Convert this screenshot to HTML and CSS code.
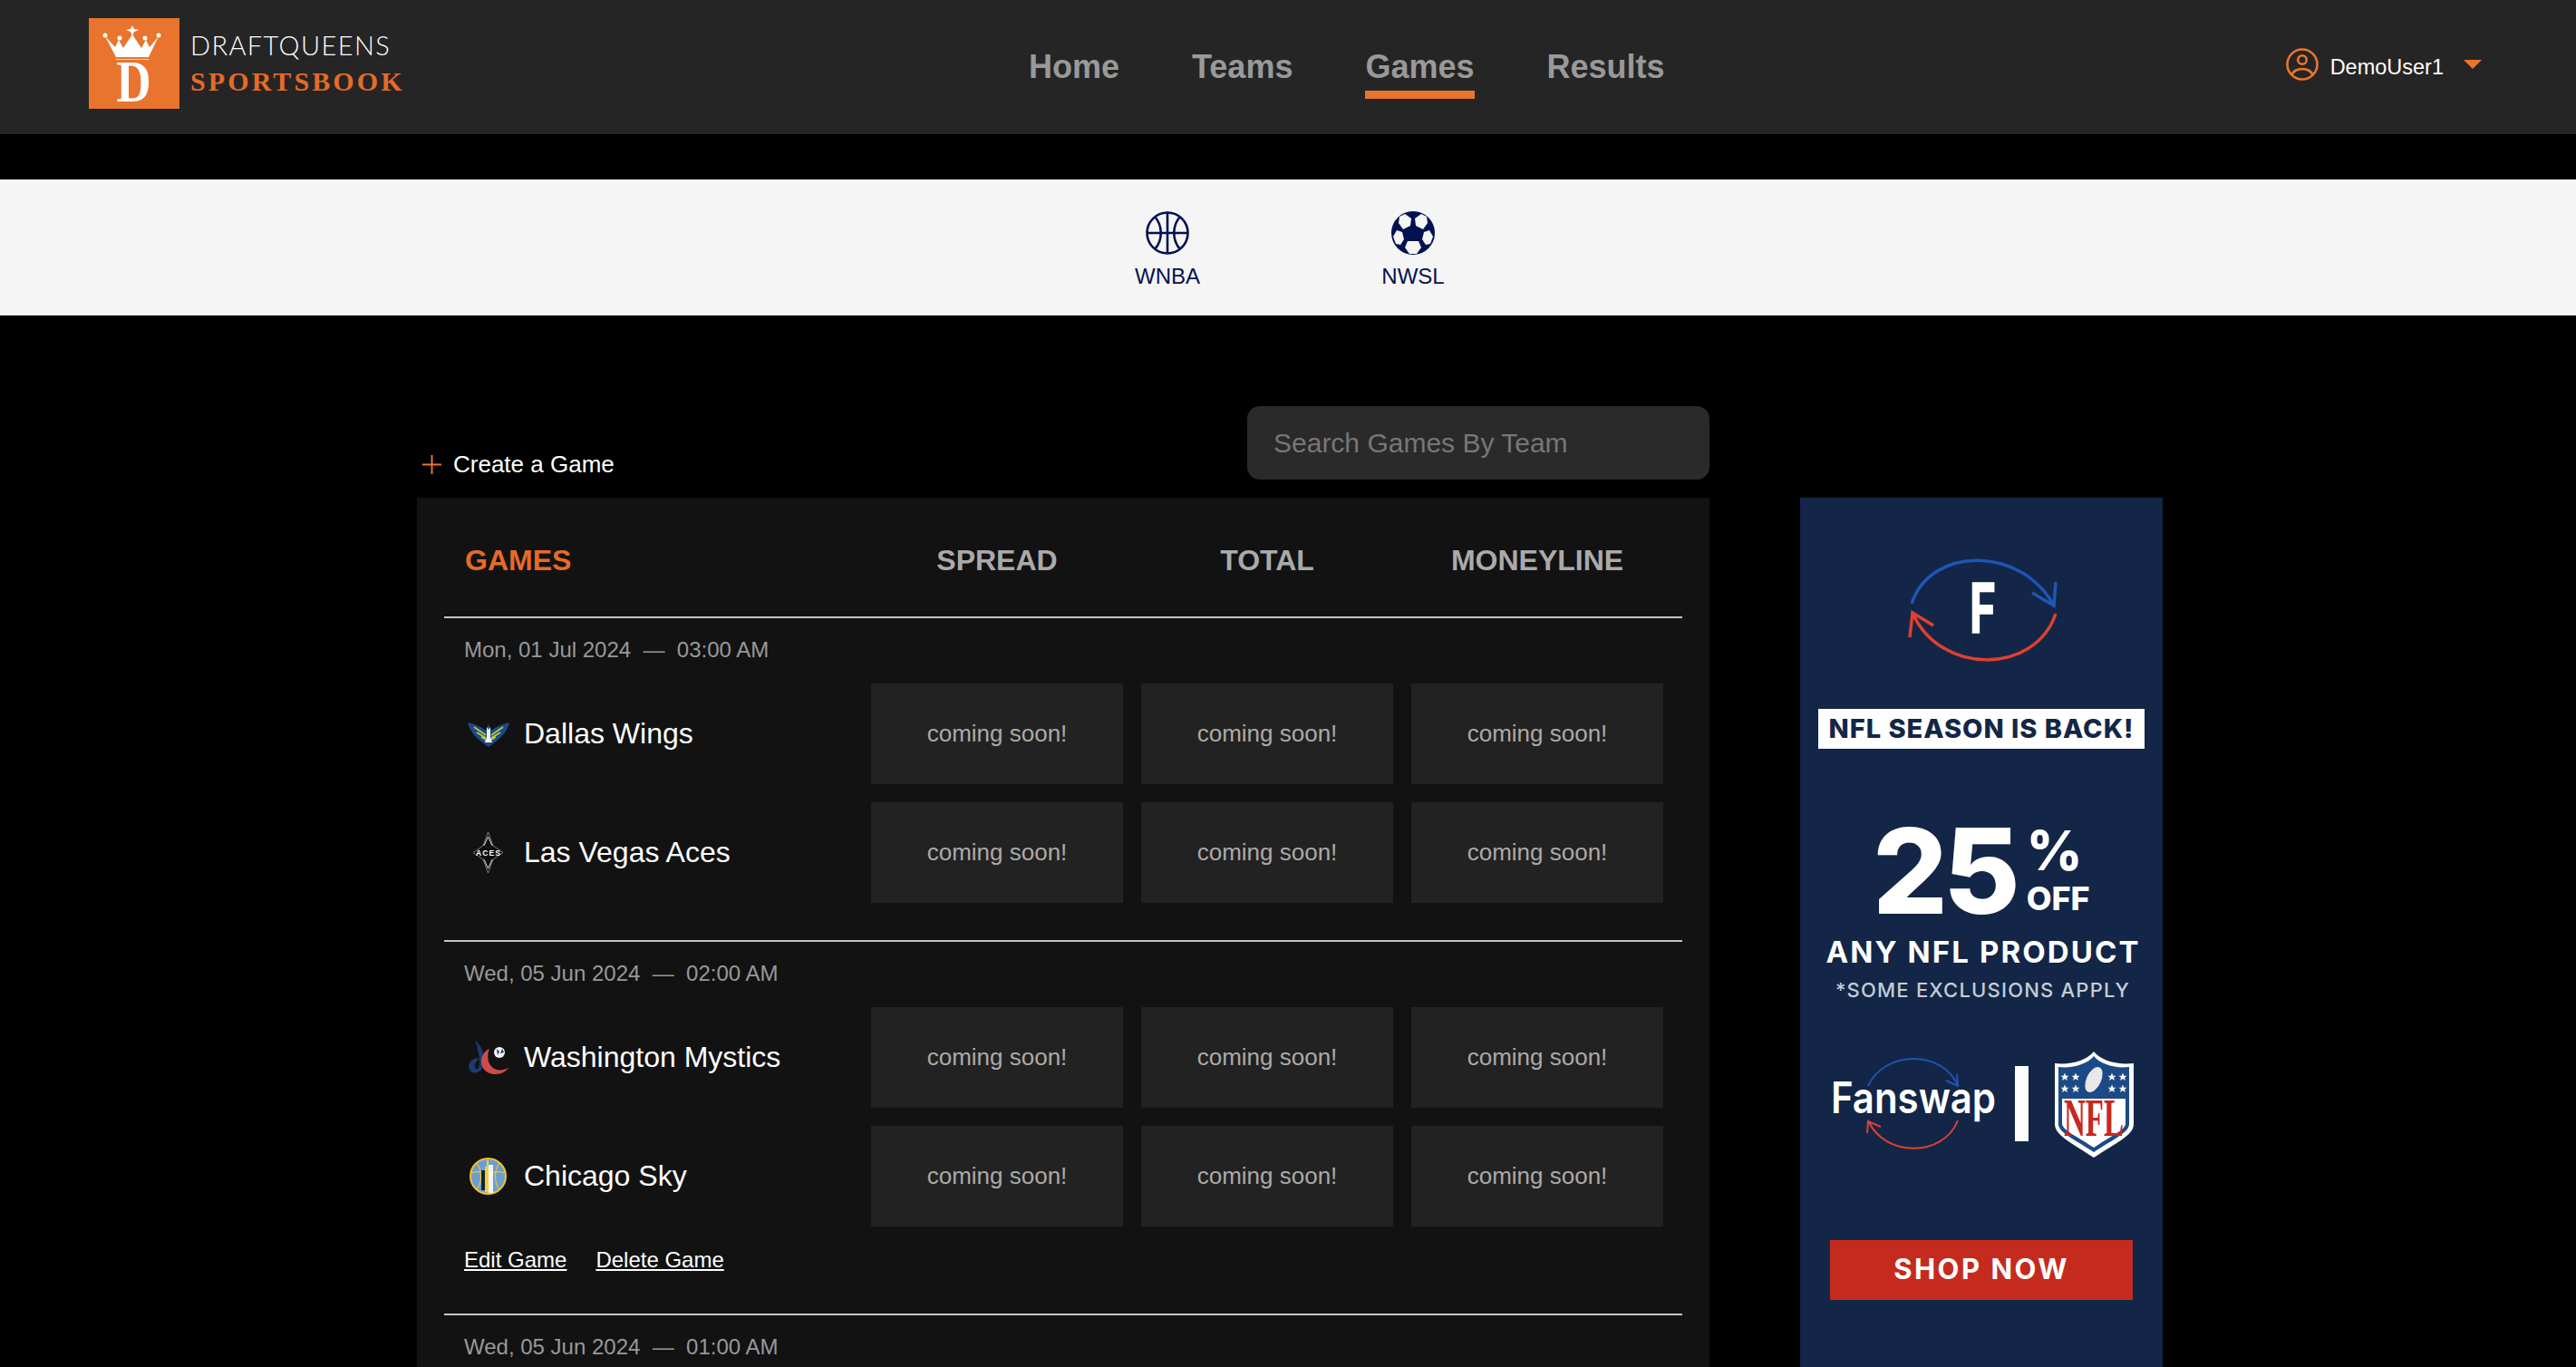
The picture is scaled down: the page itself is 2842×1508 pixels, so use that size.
FILE: index.html
```html
<!DOCTYPE html>
<html lang="en">

<head>
    <meta charset="UTF-8">
    <title>DraftQueens Sportsbook</title>
    <link rel="stylesheet" href="styles.css">
</head>

<body>
    <header class="topbar">
        <a class="brand" href="#">
            <svg class="brand-mark" viewBox="0 0 100 100">
                <rect width="100" height="100" fill="#e9742d" />
                <g fill="#fff">
                    <path d="M18 20 L29 32 L33 24 L38 33 L48 18 L58 33 L63 24 L67 32 L77 20 L66 43 L30 43 Z" />
                    <circle cx="18" cy="19" r="2.5" />
                    <circle cx="77" cy="19" r="2.5" />
                    <circle cx="34" cy="22" r="2.5" />
                    <circle cx="62" cy="22" r="2.5" />
                    <path d="M48 8 L50 12 L55 13 L50 15 L48 20 L46 15 L41 13 L46 12 Z" />
                    <rect x="30" y="45" width="36" height="1" opacity="0.7" />
                    <text class="brand-d" x="62" y="92" text-anchor="middle" transform="scale(.8 1)">D</text>
                </g>
            </svg>
            <span class="brand-text">
                <span class="brand-top">DRAFTQUEENS</span>
                <span class="brand-bottom">SPORTSBOOK</span>
            </span>
        </a>

        <nav class="main-nav">
            <a href="#">Home</a>
            <a href="#">Teams</a>
            <a class="active" href="#">Games</a>
            <a href="#">Results</a>
        </nav>

        <div class="user-menu">
            <svg class="user-icon" viewBox="0 0 36 36" fill="none" stroke="#e9742d" stroke-width="2.6">
                <circle cx="18" cy="18" r="16.5" />
                <circle cx="18" cy="13" r="4.8" />
                <path d="M6.5 29.5 C10 21 26 21 29.5 29.5" />
            </svg>
            <span>DemoUser1</span>
            <span class="caret"></span>
        </div>
    </header>

    <div class="league-bar">
        <a class="league" href="#">
            <svg viewBox="0 0 48 48" fill="none" stroke="#02124f" stroke-width="2.6">
                <circle cx="24" cy="24" r="22.5" />
                <path d="M24 2 V46 M2 24 H46" />
                <path d="M10 6 C19 16 19 32 10 42 M38 6 C29 16 29 32 38 42" />
            </svg>
            <span>WNBA</span>
        </a>
        <a class="league" href="#">
            <svg viewBox="0 0 48 48">
                <circle cx="24" cy="24" r="24" fill="#02124f" />
                <g fill="#f5f5f5">
                    <polygon points="15,3 22,8 21,16 13,20 8,13 9,6" />
                    <polygon points="33,3 39,6 40,13 35,20 27,16 26,8" />
                    <polygon points="6,21 12,23 14,31 10,37 5,36 2,28" />
                    <polygon points="42,21 36,23 34,31 38,37 43,36 46,28" />
                    <polygon points="18,33 30,33 33,40 28,47 20,47 15,40" />
                </g>
            </svg>
            <span>NWSL</span>
        </a>
    </div>

    <main class="content">
        <div class="toolbar">
            <a class="create-game" href="#">
                <svg viewBox="0 0 21 21" stroke="#e9742d" stroke-width="2">
                    <path d="M10.5 0 V21 M0 10.5 H21" />
                </svg>
                <span>Create a Game</span>
            </a>
            <input class="search" type="text" placeholder="Search Games By Team">
        </div>

        <section class="games-card">
            <div class="games-head">
                <div class="title">GAMES</div>
                <div>SPREAD</div>
                <div>TOTAL</div>
                <div>MONEYLINE</div>
            </div>

            <div class="game">
                <div class="game-date">Mon, 01 Jul 2024 &nbsp;—&nbsp; 03:00 AM</div>
                <div class="team-row">
                    <div class="team">
                        <span class="team-logo">
                            <svg width="46" height="28" viewBox="0 0 46 28">
                                <path d="M0 1 C8 3 14 5 20 10 L23 3 L26 10 C32 5 38 3 46 1 C44 10 38 18 23 28 C8 18 2 10 0 1 Z" fill="#1d4a85" />
                                <path d="M7 6 L20 15 M10 12 L20 18 M15 17 L20 20 M39 6 L26 15 M36 12 L26 18 M31 17 L26 20" stroke="#bccb3a" stroke-width="1.6" />
                                <path d="M21 6 L23 9 L25 6 L25 17 L27 23 L19 23 L21 17 Z" fill="#f4f4f4" />
                            </svg>
                        </span>
                        <span>Dallas Wings</span>
                    </div>
                    <div class="odds">coming soon!</div>
                    <div class="odds">coming soon!</div>
                    <div class="odds">coming soon!</div>
                </div>
                <div class="team-row">
                    <div class="team">
                        <span class="team-logo">
                            <svg width="33" height="45" viewBox="0 0 33 45">
                                <path d="M16.5 0 L22 15 L33 22.5 L22 30 L16.5 45 L11 30 L0 22.5 L11 15 Z" fill="#0c0c0c" stroke="#999" stroke-width="0.8" />
                                <path d="M12 15 L16.5 5 L21 15 M12 30 L16.5 40 L21 30" fill="none" stroke="#ddd" stroke-width="1" />
                                <text class="aces-text" x="3" y="25.6" textLength="27">ACES</text>
                            </svg>
                        </span>
                        <span>Las Vegas Aces</span>
                    </div>
                    <div class="odds">coming soon!</div>
                    <div class="odds">coming soon!</div>
                    <div class="odds">coming soon!</div>
                </div>
            </div>

            <div class="game">
                <div class="game-date">Wed, 05 Jun 2024 &nbsp;—&nbsp; 02:00 AM</div>
                <div class="team-row">
                    <div class="team">
                        <span class="team-logo">
                            <svg width="46" height="40" viewBox="0 0 46 40">
                                <path d="M8 0 C18 10 21 22 17 30 C14 37 5 39 2 33 C-1 27 4 20 13 20 C9 24 6 29 9 32 C13 34 16 24 8 0 Z" fill="#1c3a70" />
                                <path d="M24 10 C14 14 11 30 22 36 C32 41 42 36 46 30 C40 35 30 35 25 28 C21 22 22 15 24 10 Z" fill="#cf4b4b" />
                                <circle cx="35" cy="14" r="6" fill="#f4f4f4" />
                                <path d="M32 10 L35 13 L33 17 Z M38 10 L40 14 L36 15 Z" fill="#1c3a70" />
                            </svg>
                        </span>
                        <span>Washington Mystics</span>
                    </div>
                    <div class="odds">coming soon!</div>
                    <div class="odds">coming soon!</div>
                    <div class="odds">coming soon!</div>
                </div>
                <div class="team-row">
                    <div class="team">
                        <span class="team-logo">
                            <svg width="41" height="41" viewBox="0 0 41 41">
                                <circle cx="20.5" cy="20.5" r="19.5" fill="#6a9fd4" stroke="#f2c230" stroke-width="2" />
                                <path d="M2 17 C8 15 12 15 16 17 M8 6 C14 14 14 28 8 35 M39 17 C33 15 30 15 26 17 M33 6 C27 14 27 28 33 35" fill="none" stroke="#f2c230" stroke-width="1.2" />
                                <rect x="13" y="14" width="4" height="22" fill="#14233a" />
                                <path d="M17 38 V10 H19 V3 H21 V39 Z" fill="#f5cf3c" />
                                <rect x="21" y="8" width="5" height="31" fill="#f4f4f4" />
                            </svg>
                        </span>
                        <span>Chicago Sky</span>
                    </div>
                    <div class="odds">coming soon!</div>
                    <div class="odds">coming soon!</div>
                    <div class="odds">coming soon!</div>
                </div>
                <div class="game-actions">
                    <a href="#">Edit Game</a>
                    <a href="#">Delete Game</a>
                </div>
            </div>

            <div class="game">
                <div class="game-date">Wed, 05 Jun 2024 &nbsp;—&nbsp; 01:00 AM</div>
            </div>
        </section>

        <aside class="promo">
            <svg class="promo-logo" width="180" height="125" viewBox="0 0 180 125" fill="none" stroke-width="3.5">
                <path d="M9 56 C30 -8 130 -8 166 58 M168 32 L166 58 L142 44" stroke="#1f55b5" />
                <path d="M168 67 C145 135 40 135 10 66 M7 93 L10 66 L33 80" stroke="#e0402f" />
                <text class="promo-f" x="73" y="88" textLength="29" lengthAdjust="spacingAndGlyphs">F</text>
            </svg>
            <div class="promo-banner">NFL SEASON IS BACK!</div>
            <div class="promo-discount">
                <span class="promo-num">25</span>
                <span class="promo-off">
                    <span class="promo-pct">%</span>
                    <span class="promo-off-text">OFF</span>
                </span>
            </div>
            <div class="promo-any">ANY NFL PRODUCT</div>
            <div class="promo-small">*SOME EXCLUSIONS APPLY</div>
            <svg class="promo-partners" width="335" height="118" viewBox="0 0 335 118" fill="none">
                <defs>
                    <polygon id="star" points="0,-4.5 1.3,-1.3 4.5,-1.3 2,.7 2.9,4 0,2 -2.9,4 -2,.7 -4.5,-1.3 -1.3,-1.3" fill="#fff" />
                </defs>
                <path d="M42 38 C60 -2 125 -2 141 38 M140 25 L141 38 L128 32" stroke="#1f55b5" stroke-width="2" />
                <path d="M141 76 C125 117 60 117 42 76 M41 90 L42 77 L56 83" stroke="#e0402f" stroke-width="2" />
                <text class="fanswap" x="1" y="68" textLength="182" lengthAdjust="spacingAndGlyphs">Fanswap</text>
                <rect x="204" y="16" width="15" height="83" fill="#fff" />
                <path d="M291 0 C283 10 265 15 248 13 V80 C248 92 265 100 291 117 C317 100 335 92 335 80 V13 C317 15 299 10 291 0 Z" fill="#fff" />
                <path d="M291 5 C284 14 267 19 252 17 V80 C252 89 268 96 291 111 C314 96 330 89 330 80 V17 C315 19 298 14 291 5 Z" fill="#1c4a86" />
                <path d="M256 52 H326 V79 C326 87 310 93 291 106 C272 93 256 87 256 79 Z" fill="#fff" />
                <use href="#star" x="259" y="28" />
                <use href="#star" x="271" y="28" />
                <use href="#star" x="259" y="41" />
                <use href="#star" x="271" y="41" />
                <use href="#star" x="311" y="28" />
                <use href="#star" x="323" y="28" />
                <use href="#star" x="311" y="41" />
                <use href="#star" x="323" y="41" />
                <ellipse cx="291" cy="31" rx="8" ry="15" transform="rotate(25 291 31)" fill="#e8e8e8" />
                <text class="nfl-text" x="258" y="93" textLength="66" lengthAdjust="spacingAndGlyphs">NFL</text>
            </svg>
            <div class="promo-shop">SHOP NOW</div>
        </aside>
    </main>
</body>

</html>
```

FILE: styles.css
```css
html,
body {
    height: 1508px;
    overflow: hidden;
}

body {
    margin: 0;
    background-color: #000;
    color: #fff;
    font-family: 'Liberation Sans', Arial, sans-serif;
}

a {
    color: inherit;
    text-decoration: none;
}

/* top bar */
.topbar {
    display: flex;
    align-items: center;
    height: 148px;
    padding: 0 104px 0 98px;
    background-color: #252525;
}

.brand {
    display: flex;
    align-items: center;
    gap: 12px;
    width: 1037px;
}

.brand-mark {
    width: 100px;
    height: 100px;
    margin-top: -8px;
    overflow: visible;
}

.brand-d {
    font-family: 'Liberation Serif', serif;
    font-weight: 700;
    font-size: 66px;
}

.brand-text {
    display: flex;
    flex-direction: column;
    gap: 8px;
    margin-top: -8px;
}

.brand-top {
    font-family: Lato, sans-serif;
    font-weight: 300;
    font-size: 29px;
    line-height: 32px;
    letter-spacing: 1.4px;
}

.brand-bottom {
    font-family: 'Liberation Serif', serif;
    font-weight: 700;
    font-size: 30px;
    line-height: 32px;
    letter-spacing: 3.1px;
    color: #e56b28;
}

.main-nav {
    display: flex;
    gap: 80px;
}

.main-nav a {
    padding: 15px 0 6px;
    border-bottom: 9px solid transparent;
    color: #999;
    font-weight: 700;
    font-size: 36px;
    line-height: 40px;
}

.main-nav a.active {
    border-bottom-color: #e9742d;
}

.user-menu {
    display: flex;
    align-items: center;
    margin-left: auto;
    font-size: 23.5px;
}

.user-icon {
    width: 36px;
    height: 36px;
    margin: -6px 13px 0 0;
}

.caret {
    width: 0;
    height: 0;
    margin: -6px 0 0 22px;
    border-left: 10px solid transparent;
    border-right: 10px solid transparent;
    border-top: 10px solid #e9742d;
}

/* league picker */
.league-bar {
    display: flex;
    justify-content: center;
    height: 150px;
    margin-top: 50px;
    padding-left: 5px;
    background-color: #f5f5f5;
    box-sizing: border-box;
}

.league {
    display: flex;
    flex-direction: column;
    align-items: center;
    gap: 10px;
    width: 271px;
    padding-top: 35px;
    color: #02124f;
    font-size: 24px;
    line-height: 28px;
}

.league svg {
    width: 48px;
    height: 48px;
}

/* games + promo */
.content {
    display: grid;
    grid-template-columns: 1426px 400px;
    column-gap: 100px;
    row-gap: 20px;
    align-items: start;
    padding: 100px 0 0 460px;
}

.toolbar {
    display: flex;
    justify-content: space-between;
    align-items: flex-end;
    grid-column: 1 / 3;
    width: 1426px;
}

.create-game {
    display: flex;
    align-items: center;
    gap: 13px;
    padding: 0 0 2px 6px;
    font-size: 26px;
    line-height: 30px;
}

.create-game svg {
    width: 21px;
    height: 21px;
}

.search {
    width: 510px;
    height: 81px;
    padding: 0 29px;
    box-sizing: border-box;
    border: none;
    border-radius: 14px;
    background-color: #2a2a2a;
    color: #fff;
    font-family: inherit;
    font-size: 30px;
}

.search::placeholder {
    color: #777;
}

.games-card {
    padding: 0 30px;
    background-color: #121212;
}

.games-head,
.team-row {
    display: grid;
    grid-template-columns: 1fr repeat(3, 278px);
    column-gap: 20px;
}

.games-head {
    align-items: center;
    height: 123px;
    padding: 8px 21px 0 23px;
    color: #aaa;
    font-weight: 700;
    font-size: 32px;
    text-align: center;
}

.games-head .title {
    color: #e56b28;
    text-align: left;
}

.game {
    padding: 20px 21px 41px 22px;
    border-top: 2px solid #c4c4c4;
}

.game-date {
    margin-bottom: 22px;
    color: #999;
    font-size: 24px;
    line-height: 30px;
}

.team-row {
    height: 111px;
}

.team-row + .team-row {
    margin-top: 20px;
}

.team {
    display: flex;
    align-items: center;
    gap: 13px;
    font-size: 32px;
}

.team-logo {
    display: flex;
    justify-content: center;
    width: 53px;
}

.aces-text {
    fill: #fff;
    font-family: 'Liberation Sans', sans-serif;
    font-weight: 700;
    font-size: 8.5px;
}

.odds {
    display: flex;
    align-items: center;
    justify-content: center;
    background-color: #222;
    color: #aaa;
    font-size: 26px;
}

.game-actions {
    display: flex;
    gap: 32px;
    margin: 22px 0 3px;
    font-size: 24px;
    line-height: 30px;
}

.game-actions a {
    text-decoration: underline;
}

/* promo image */
.promo {
    display: flex;
    flex-direction: column;
    align-items: center;
    height: 1000px;
    background-color: #132647;
    font-family: Inter, sans-serif;
    filter: blur(0.4px);
}

.promo-logo {
    align-self: flex-start;
    margin: 61px 0 0 114px;
}

.promo-f {
    fill: #fff;
    stroke: #fff;
    stroke-width: 1.5px;
    font-family: Inter, sans-serif;
    font-weight: 700;
    font-size: 76px;
}

.promo-banner {
    width: 360px;
    height: 44px;
    margin-top: 47px;
    background-color: #fff;
    color: #132647;
    font-weight: 800;
    font-size: 29px;
    line-height: 44px;
    letter-spacing: 1px;
    text-align: center;
    white-space: nowrap;
}

.promo-discount {
    display: flex;
    align-self: flex-start;
    height: 100px;
    margin: 85px 0 0 80px;
}

.promo-num {
    font-weight: 800;
    font-size: 130px;
    line-height: 100px;
    letter-spacing: -5px;
}

.promo-off {
    display: flex;
    flex-direction: column;
    margin-left: 12px;
    font-weight: 800;
}

.promo-pct {
    font-size: 60px;
    line-height: 54px;
}

.promo-off-text {
    margin-top: 9px;
    font-size: 36px;
    line-height: 34px;
}

.promo-any {
    margin: 24px 0 0 4px;
    font-weight: 700;
    font-size: 33px;
    line-height: 30px;
    letter-spacing: 2.1px;
    white-space: nowrap;
}

.promo-small {
    margin: 15px 0 0 3px;
    color: #c5ccd6;
    font-weight: 500;
    font-size: 22px;
    line-height: 24px;
    letter-spacing: 1.2px;
    white-space: nowrap;
}

.promo-partners {
    align-self: flex-start;
    margin: 56px 0 0 33px;
    overflow: visible;
}

.fanswap {
    fill: #fff;
    font-family: Inter, sans-serif;
    font-weight: 600;
    font-size: 48px;
}

.nfl-text {
    fill: #c8281e;
    font-family: 'Liberation Serif', serif;
    font-weight: 700;
    font-size: 60px;
}

.promo-shop {
    width: 334px;
    height: 66px;
    margin-top: 90px;
    background-color: #c42b1e;
    font-weight: 700;
    font-size: 31px;
    line-height: 63px;
    letter-spacing: 2.5px;
    text-align: center;
}
```
